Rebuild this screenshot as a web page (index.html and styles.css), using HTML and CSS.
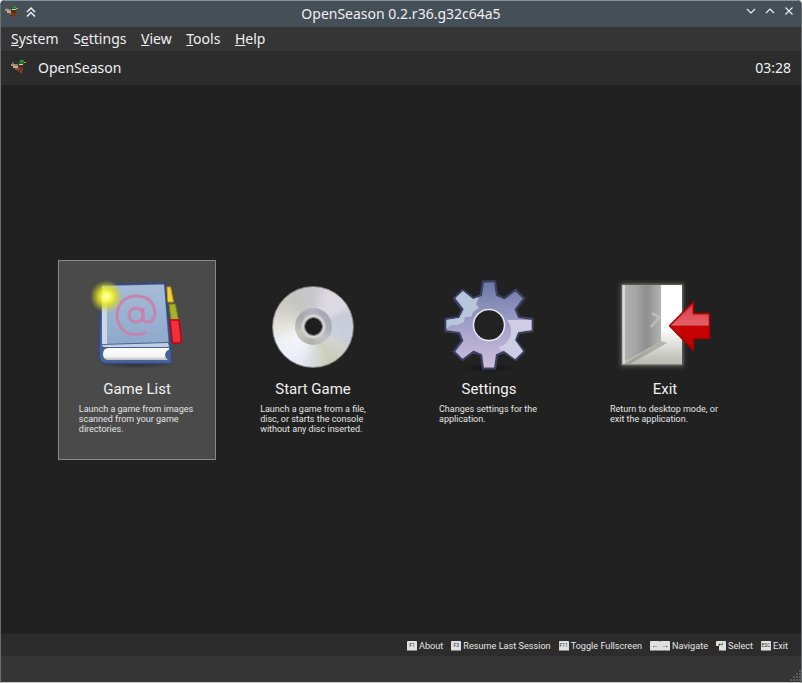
FILE: index.html
```html
<!DOCTYPE html>
<html lang="en">
<head>
<meta charset="utf-8">
<title>OpenSeason</title>
<link rel="stylesheet" href="styles.css">
</head>
<body>
<svg class="defs" width="0" height="0" aria-hidden="true">
  <symbol id="duck" viewBox="0 0 16 16" shape-rendering="crispEdges">
    <rect x="9" y="1" width="4" height="1" fill="#2f8a3a"/>
    <rect x="8" y="2" width="5" height="3" fill="#1f6a2c"/>
    <rect x="10" y="2" width="2" height="1" fill="#3a9a48"/>
    <rect x="13" y="3" width="2" height="1" fill="#d8a818"/>
    <rect x="8" y="5" width="4" height="1" fill="#cfcfc4"/>
    <rect x="1" y="3" width="2" height="2" fill="#6e6458"/>
    <rect x="0" y="5" width="4" height="2" fill="#a8967e"/>
    <rect x="2" y="7" width="5" height="2" fill="#c4b094"/>
    <rect x="4" y="5" width="3" height="2" fill="#8e7a62"/>
    <rect x="7" y="6" width="5" height="3" fill="#5e2c18"/>
    <rect x="4" y="9" width="4" height="2" fill="#6e5a48"/>
    <rect x="8" y="9" width="4" height="3" fill="#7e3418"/>
    <rect x="6" y="11" width="3" height="2" fill="#4a3a2c"/>
    <rect x="9" y="12" width="2" height="2" fill="#8e3c14"/>
  </symbol>
</svg>
<div class="window">
  <div class="titlebar">
    <div class="tb-left">
      <svg class="tb-duck"><use href="#duck"/></svg>
      <svg class="tb-icon tb-bold" viewBox="0 0 12 12"><path d="M2 6 6 2 10 6M2 10.500 6 6.500 10 10.500"/></svg>
    </div>
    <div class="tb-title">OpenSeason 0.2.r36.g32c64a5</div>
    <div class="tb-right">
      <svg class="tb-icon" viewBox="0 0 12 12"><path d="M2 4 6 8 10 4"/></svg>
      <svg class="tb-icon" viewBox="0 0 12 12"><path d="M2 8 6 4 10 8"/></svg>
      <svg class="tb-icon" viewBox="0 0 12 12"><path d="M2.500 2.500 9.500 9.500M9.500 2.500 2.500 9.500"/></svg>
    </div>
  </div>
  <nav class="menubar">
    <span class="menu"><u>S</u>ystem</span>
    <span class="menu">S<u>e</u>ttings</span>
    <span class="menu"><u>V</u>iew</span>
    <span class="menu"><u>T</u>ools</span>
    <span class="menu"><u>H</u>elp</span>
  </nav>
  <header class="header">
    <svg class="hd-duck"><use href="#duck"/></svg>
    <span class="hd-title">OpenSeason</span>
    <span class="hd-time">03:28</span>
  </header>
  <main class="main">
    <div class="cards">
      <div class="card selected">
        <svg class="icon" viewBox="0 0 96 96">
          <defs>
            <linearGradient id="cover" x1="0" y1="0" x2="0" y2="1"><stop offset="0" stop-color="#a6bcd8"/><stop offset="1" stop-color="#8ea9cc"/></linearGradient>
            <linearGradient id="pages" x1="0" y1="0" x2="0" y2="1"><stop offset="0" stop-color="#fff"/><stop offset=".7" stop-color="#f4f4f4"/><stop offset="1" stop-color="#bcbcbc"/></linearGradient>
            <radialGradient id="glow"><stop offset="0" stop-color="#fffff0"/><stop offset=".25" stop-color="#fdfd50"/><stop offset=".55" stop-color="#e0e020" stop-opacity=".8"/><stop offset="1" stop-color="#c8c820" stop-opacity="0"/></radialGradient>
            <radialGradient id="shade"><stop offset="0" stop-color="#000" stop-opacity=".4"/><stop offset="1" stop-color="#000" stop-opacity="0"/></radialGradient>
          </defs>
          <ellipse cx="48" cy="88" rx="38" ry="5" fill="url(#shade)"/>
          <path d="M78 11h3.500l3 15h-6z" fill="#f4d030" stroke="#d09a10"/>
          <path d="M80 28h6.500l3 16h-7.500z" fill="#a4b030" stroke="#6f7f18"/>
          <path d="M81 44h9l2.500 21-2 2h-7z" fill="#f0303a" stroke="#c00010" stroke-width="1.500"/>
          <path d="M12 8.500 76 7 81.500 70 83 87.500H17Q10 87.500 10 79L10 72z" fill="#4a6296" stroke="#34487c" stroke-width="1.500"/>
          <path d="M13 10 75 8.500 79.500 66 13 68z" fill="url(#cover)"/>
          <path d="M13 10h5V68h-5z" fill="#c8d8ea"/>
          <path d="M13 69 79 67 80 71H17Q13 71 13 69z" fill="#c0d0e4"/>
          <path d="M20 72H80V73.500C75 76 75 81 79 84H20Q14 84 14 78 14 72 20 72z" fill="url(#pages)"/>
          <g fill="none" stroke="#c484ac" stroke-width="3">
            <circle cx="47" cy="39" r="7"/>
            <path d="M54 32V42Q54 46 58 46 65 46 66 38 65 20 47 20 29 21 28 39 29 58 47 58.500 53 58.500 58 56"/>
          </g>
          <circle cx="17.500" cy="20.500" r="16.500" fill="url(#glow)"/>
        </svg>
        <div class="label">Game List</div>
        <div class="desc">Launch a game from images<br>scanned from your game<br>directories.</div>
      </div>
      <div class="card">
        <div class="disc"><div class="hub"></div></div>
        <div class="label">Start Game</div>
        <div class="desc desc-start">Launch a game from a file,<br>disc, or starts the console<br>without any disc inserted.</div>
      </div>
      <div class="card">
        <svg class="icon" viewBox="0 0 96 96">
          <defs>
            <linearGradient id="gear" gradientUnits="userSpaceOnUse" x1="0" y1="-44" x2="0" y2="44"><stop offset="0" stop-color="#6878a4"/><stop offset=".55" stop-color="#a8a4cc"/><stop offset="1" stop-color="#d0c0dc"/></linearGradient>
            <radialGradient id="gshade"><stop offset="0" stop-color="#000" stop-opacity=".5"/><stop offset="1" stop-color="#000" stop-opacity="0"/></radialGradient>
          </defs>
          <ellipse cx="48" cy="92" rx="28" ry="4" fill="url(#gshade)"/>
          <g transform="translate(48 49)">
            <path fill="url(#gear)" stroke="#3a4060" stroke-width="2.200" stroke-linejoin="round" d="M-6.100-43.600H6.100L8-30 15.500-26.800 26.500-35.200 35.200-26.500 26.800-15.500 30-8 43.600-6.100V6.100L30 8 26.800 15.500 35.200 26.500 26.500 35.200 15.500 26.800 8 30 6.100 43.600H-6.100L-8 30-15.500 26.800-26.500 35.200-35.200 26.500-26.800 15.500-30 8-43.600 6.100V-6.100L-30-8-26.800-15.500-35.200-26.500-26.500-35.200-15.500-26.800-8-30z"/>
            <path fill="#b8c6dc" d="M-42.500-5-30-7-25-16-33.500-27-26-34-16-26-10-28-13-21-10-17-16-13-18-8-24-8-25-3-32 0-37 0-42.500 3z"/>
            <path fill="#cfcde4" d="M18 -5 42.500-5V5L29 7 26 15 34 26 26 34 15 26C13 26 10 24 10 22 22 18 26 5 18-5z"/>
            <circle r="15.500" fill="#222" stroke="#e8eaf4" stroke-width="1.500"/>
          </g>
        </svg>
        <div class="label">Settings</div>
        <div class="desc">Changes settings for the<br>application.</div>
      </div>
      <div class="card">
        <svg class="icon" viewBox="0 0 96 96">
          <defs>
            <linearGradient id="door" x1="0" y1="0" x2="1" y2="0"><stop offset="0" stop-color="#b0b0b0"/><stop offset=".3" stop-color="#a4a4a4"/><stop offset=".6" stop-color="#8e8e8e"/><stop offset="1" stop-color="#b4b4b4"/></linearGradient>
            <linearGradient id="open" x1="0" y1="0" x2="0" y2="1"><stop offset="0" stop-color="#fff"/><stop offset=".55" stop-color="#fff"/><stop offset="1" stop-color="#b8b8b0"/></linearGradient>
            <linearGradient id="arrow" x1="0" y1="0" x2="0" y2="1"><stop offset="0" stop-color="#d8202a"/><stop offset=".48" stop-color="#e06068"/><stop offset=".5" stop-color="#c80000"/><stop offset="1" stop-color="#c00000"/></linearGradient>
            <filter id="halo" x="-20%" y="-20%" width="140%" height="140%"><feGaussianBlur stdDeviation="2"/></filter>
          </defs>
          <rect x="3" y="7" width="64" height="84" fill="#777" filter="url(#halo)" opacity=".5"/>
          <rect x="4" y="7.500" width="62.500" height="82.500" rx="1.500" fill="#55584f"/>
          <rect x="5.500" y="9" width="59.500" height="79.500" fill="url(#open)"/>
          <path d="M5.500 9H44V65L5.500 88.500z" fill="#d8d8d4"/>
          <path d="M8 9H44V65L8 86z" fill="url(#door)"/>
          <path d="M8 87 44 65 50 67 12 88.500z" fill="#8a8a86" opacity=".55"/>
          <path d="M35 37.500 42.500 41 34 51" fill="none" stroke="#bdbdbd" stroke-width="2.500"/>
          <path d="M52.500 49.700 76.500 25.700V37.500H92.500V62.500H76.500V74.500z" fill="url(#arrow)" stroke="#a40000" stroke-width="1.500" stroke-linejoin="round"/>
          <path d="M56 49.700 75 30.500V39.500H90.500V48H73z" fill="#e46068" opacity=".45"/>
        </svg>
        <div class="label">Exit</div>
        <div class="desc">Return to desktop mode, or<br>exit the application.</div>
      </div>
    </div>
  </main>
  <div class="hints">
    <span class="hint"><span class="key">F1</span><span class="gap"></span>About</span>
    <span class="hint"><span class="key">F3</span><span class="gap"></span>Resume Last Session</span>
    <span class="hint"><span class="key">F11</span><span class="gap"></span>Toggle Fullscreen</span>
    <span class="hint"><span class="key key-arrow">←</span><span class="key key-arrow">→</span><span class="gap"></span>Navigate</span>
    <span class="hint"><span class="key enter">↵</span><span class="gap"></span>Select</span>
    <span class="hint"><span class="key">ESC</span><span class="gap"></span>Exit</span>
  </div>
  <div class="statusbar">
    <svg class="grip" viewBox="0 0 12 12" shape-rendering="crispEdges"><path d="M10 1h2v2h-2zM7 4h2v2H7zM10 4h2v2h-2zM4 7h2v2H4zM7 7h2v2H7zM10 7h2v2h-2zM1 10h2v2H1zM4 10h2v2H4zM7 10h2v2h-2zM10 10h2v2h-2z"/></svg>
  </div>
</div>
</body>
</html>
```
FILE: styles.css
```css
html, body { margin: 0; padding: 0; background: #dfe1e3; }
body { width: 802px; height: 683px; overflow: hidden; }
.defs { position: absolute; }
.window {
  height: 683px; box-sizing: border-box; display: flex; flex-direction: column;
  border-left: 1px solid #6a6e72; border-right: 1px solid #6a6e72; border-bottom: 1px solid #c8c8c8;
  border-radius: 5px 5px 0 0; overflow: hidden; background: #212121;
  font-family: "Noto Sans", sans-serif; color: #eff0f1;
}
.titlebar {
  height: 27px; flex: none; background: #454f58; display: flex; align-items: flex-start;
  justify-content: space-between; position: relative; padding: 4px 6px 0 4px; box-sizing: border-box;
  border-top: 1px solid #8a9299;
}
.tb-left, .tb-right { display: flex; align-items: center; }
.tb-left { gap: 6px; }
.tb-right { gap: 7px; }
.tb-duck { width: 14px; height: 14px; }
.tb-icon { width: 12px; height: 12px; fill: none; stroke: #eff0f1; stroke-width: 1.100; }
.tb-bold { stroke-width: 1.500; }
.tb-title { position: absolute; left: 0; right: 0; top: 3px; text-align: center; font-size: 14px; line-height: 19px; pointer-events: none; }
.menubar {
  height: 24px; flex: none; background: #353535; display: flex; align-items: center;
  padding-left: 10px; gap: 14.600px; font-size: 14px; line-height: 24px;
}
.header {
  height: 34px; flex: none; background: #2c2c2c; display: flex; align-items: center; box-sizing: border-box;
  padding: 0 10px 2px 10px; font-size: 14px;
}
.hd-duck { width: 16px; height: 16px; margin-right: 11px; }
.hd-time { margin-left: auto; }
.main { flex: 1; display: flex; align-items: center; justify-content: center; min-height: 0; }
.cards { display: flex; gap: 18px; }
.card {
  width: 158px; height: 200px; box-sizing: border-box; padding-top: 15px;
  display: flex; flex-direction: column; align-items: center;
  border: 1px solid transparent; font-family: Roboto, sans-serif;
}
.card.selected { background: #4a4a4a; border-color: #8a8a8a; }
.icon { width: 96px; height: 96px; flex: none; }
.disc {
  width: 82px; height: 82px; margin: 10px 7px 4px; flex: none; border-radius: 50%; position: relative;
  box-sizing: border-box; border: 1.500px solid #808080;
  background:
    radial-gradient(circle at 35% 70%, rgba(255,255,255,.35), rgba(255,255,255,0) 55%),
    conic-gradient(from 0deg, #c8c8cc 0deg, #dcd8e0 25deg, #dcdae2 55deg, #c8ccd8 70deg, #c8cedc 105deg, #cfd2cc 125deg, #c4c8b0 155deg, #d0d4d8 180deg, #e8e8f8 205deg, #eeeef8 240deg, #e4e4dc 265deg, #d0d0c8 295deg, #c4c4c0 325deg, #c8c8cc 360deg);
}
.hub {
  position: absolute; left: 50%; top: 50%; width: 37px; height: 37px; margin: -18.500px 0 0 -18.500px; border-radius: 50%;
  background:
    radial-gradient(circle, #1e1e1e 0 8px, #8a8a8a 8.500px 9px, #d4d4d4 10px 11px, rgba(200,200,200,0) 13px),
    conic-gradient(#b4b4c4 0deg, #a8a8b8 40deg, #aeaeb8 100deg, #c4c4c8 140deg, #b0b0a8 190deg, #c8c8c0 250deg, #a8a8a8 300deg, #b4b4c4 360deg);
}
.label { margin-top: 9px; font-size: 15px; line-height: 17px; color: #f0f0f0; }
.desc { margin-top: 6px; margin-right: 2px; font-size: 9px; line-height: 10px; color: #e4e4e4; }
.desc-start { margin-right: 0; }
.hints {
  flex: none; height: 22px; box-sizing: border-box; background: #2c2c2c; display: flex; align-items: center; justify-content: flex-end;
  gap: 8px; padding: 2px 13px 0 0; font: 9.150px Roboto, sans-serif; color: #e4e4e4;
}
.hint { display: flex; align-items: center; }
.gap { width: 2px; }
.key {
  display: inline-block; width: 10px; height: 9px; line-height: 9px; text-align: center; background: #e0e0e0; color: #333;
  font-size: 5px; border-radius: 1px; border-bottom: 1px solid #8a8a8a;
}
.key-arrow { font-size: 8px; }
.key.enter { clip-path: polygon(0 0, 100% 0, 100% 100%, 30% 100%, 30% 50%, 0 50%); font-size: 7px; }
.statusbar { flex: none; height: 25px; background: #353535; display: flex; justify-content: flex-end; align-items: flex-end; padding: 0 0 1px; }
.grip { width: 12px; height: 12px; fill: #5c5c5c; }
```
